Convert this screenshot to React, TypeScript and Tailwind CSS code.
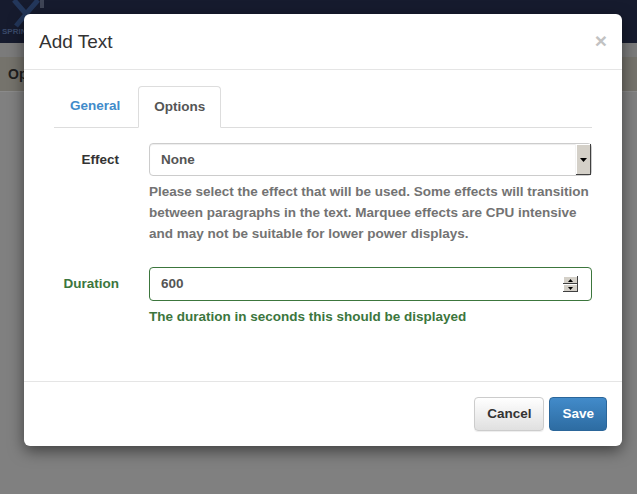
const font = { fontFamily: '"Liberation Sans", Arial, sans-serif' };

function SelectArrow() {
  return (
    <span className="flex h-[31px] w-[16px] items-center justify-center border-l border-[#f4f4f4] bg-[#d4d0c8] shadow-[inset_-1px_-1px_0_#404040,inset_1px_1px_0_#fff]">
      <svg width="7" height="4" viewBox="0 0 7 4">
        <path d="M0 0h7L3.5 4z" fill="#000" />
      </svg>
    </span>
  );
}

function Spinner() {
  return (
    <span className="flex w-[15px] flex-col">
      <span className="flex h-[8px] items-center justify-center bg-[#d4d0c8] shadow-[inset_-1px_-1px_0_#404040,inset_1px_1px_0_#fff]">
        <svg width="5" height="3" viewBox="0 0 5 3">
          <path d="M0 3h5L2.5 0z" fill="#000" />
        </svg>
      </span>
      <span className="flex h-[8px] items-center justify-center bg-[#d4d0c8] shadow-[inset_-1px_-1px_0_#404040,inset_1px_1px_0_#fff]">
        <svg width="5" height="3" viewBox="0 0 5 3">
          <path d="M0 0h5L2.5 3z" fill="#000" />
        </svg>
      </span>
    </span>
  );
}

export default function App() {
  return (
    <div className="relative h-[494px] w-[637px] overflow-hidden bg-[#808080]" style={font}>
      {/* page behind the backdrop */}
      <div className="flex h-[43px] items-start bg-[#161b2e] pl-[2px]">
        <div className="flex flex-col items-start">
          <svg width="48" height="28" viewBox="0 0 48 28" className="opacity-60">
            <path d="M12 0 L24 14 L36 0 M24 14 L14 26 M24 14 L34 26" stroke="#2d4a7a" strokeWidth="5" fill="none" />
            <rect x="38" y="0" width="4" height="8" fill="#5a6070" />
          </svg>
          <span className="text-[8px] font-bold leading-none text-[#3a4a6a]">SPRING</span>
        </div>
      </div>
      <div className="h-[14px] bg-[#7b7b7b]" />
      <div className="flex h-[35px] items-center border-b border-[#8a8a8a] bg-[#75736c] pl-[8px] text-[14px] font-bold text-[#1e1e1e]">
        Options
      </div>

      {/* modal */}
      <div className="absolute left-[24px] top-[14px] w-[598px] rounded-[6px] bg-white shadow-[0_5px_15px_rgba(0,0,0,0.5)]">
        <div className="flex h-[56px] items-center justify-between border-b border-[#e5e5e5] px-[15px] pt-[2px]">
          <h4 className="text-[19px] font-normal text-[#333]">Add Text</h4>
          <span className="-mt-[4px] text-[21px] font-bold leading-none text-[#c2c2c2]">×</span>
        </div>

        <div className="px-[30px] pt-[16px] pb-[20px] text-[13.5px] font-bold">
          <div className="flex border-b border-[#ddd] leading-[20px]">
            <a className="px-[16px] py-[10px] text-[#428bca]">General</a>
            <a className="-mb-px ml-[2px] rounded-t-[4px] border border-[#ddd] border-b-white bg-white px-[15px] py-[10px] text-[#555]">
              Options
            </a>
          </div>

          <div className="mt-[15px] flex flex-col gap-[13px]">
            <div className="flex">
              <label className="w-[65px] shrink-0 pt-[7px] text-right text-[#333]">Effect</label>
              <div className="ml-[30px] flex-1">
                <div className="flex h-[33px] items-center justify-between rounded-[4px] border border-[#ccc] pl-[11px] pr-0 text-[#555] shadow-[inset_0_1px_1px_rgba(0,0,0,0.075)]">
                  <span className="pt-[1px]">None</span>
                  <SelectArrow />
                </div>
                <p className="mt-[5px] mb-[10px] leading-[21px] text-[#737373]">
                  Please select the effect that will be used. Some effects will transition between paragraphs in the text. Marquee effects are CPU intensive and may not be suitable for lower power displays.
                </p>
              </div>
            </div>

            <div className="flex">
              <label className="w-[65px] shrink-0 pt-[7px] text-right text-[#3c763d]">Duration</label>
              <div className="ml-[30px] flex-1">
                <div className="flex h-[34px] items-center justify-between rounded-[4px] border border-[#3c763d] pl-[11px] pr-[13px] text-[#555]">
                  <span>600</span>
                  <Spinner />
                </div>
                <p className="mt-[5px] leading-[21px] text-[#3c763d]">The duration in seconds this should be displayed</p>
              </div>
            </div>
          </div>
          <div className="h-[34px]" />
        </div>

        <div className="flex justify-end gap-[5px] border-t border-[#e5e5e5] px-[15px] pt-[15px] pb-[15px] text-[13.5px] font-bold">
          <button className="h-[34px] rounded-[4px] border border-[#ccc] bg-gradient-to-b from-white to-[#e0e0e0] px-[12px] text-[#333] shadow-[inset_0_1px_0_rgba(255,255,255,0.15),0_1px_1px_rgba(0,0,0,0.075)]">
            Cancel
          </button>
          <button className="h-[34px] rounded-[4px] border border-[#2b669a] bg-gradient-to-b from-[#428bca] to-[#2d6ca2] px-[12px] text-white">
            Save
          </button>
        </div>
      </div>
    </div>
  );
}
